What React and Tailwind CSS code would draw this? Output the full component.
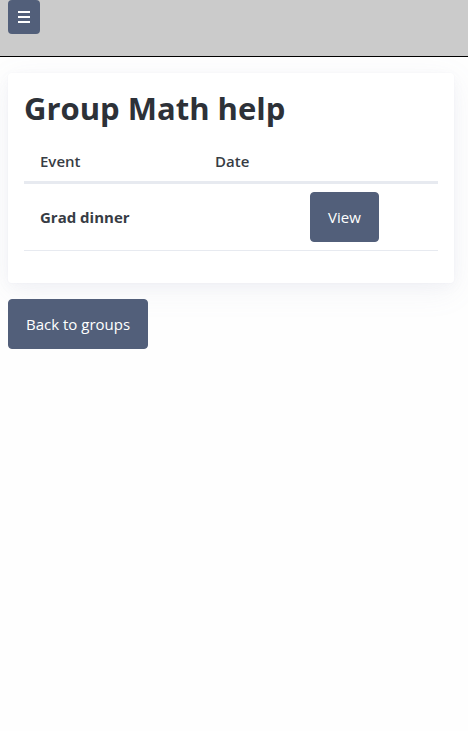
const buttonClass =
  "rounded border border-[#525f7a] bg-[#525f7a] px-[17px] py-3 text-[15px] leading-6 text-white hover:bg-[#434e66]";

const events = [{ name: "Grad dinner", date: "" }];

export default function App() {
  return (
    <div className="min-h-screen bg-[#fefefe] font-['Open_Sans','Noto_Sans',sans-serif] text-[15px] leading-6 text-[#373c44]">
      <header className="h-[57px] border-b border-black bg-[#cbcbcb] px-2">
        <button
          type="button"
          aria-label="Open menu"
          className="flex h-[34px] w-8 items-center justify-center rounded bg-[#525f7a] text-white"
        >
          <svg width="12" height="12" viewBox="0 0 12 12" fill="currentColor" aria-hidden="true">
            <path d="M0 0h12v2H0zM0 5h12v2H0zM0 10h12v2H0z" />
          </svg>
        </button>
      </header>
      <main className="pt-4 pr-3.5 pl-2">
        <article className="mb-4 rounded bg-white px-4 pt-4 pb-8 shadow-[0_4px_12px_rgba(129,145,181,0.05),0_8px_32px_rgba(129,145,181,0.09),0_0_0_1px_rgba(129,145,181,0.02)]">
          <h1 className="mb-[18px] text-[31px] leading-[38px] font-bold text-[#2d3138]">Group Math help</h1>
          <table className="w-full table-fixed border-collapse text-left">
            <colgroup>
              <col className="w-[175px]" />
              <col className="w-[95px]" />
              <col />
            </colgroup>
            <thead>
              <tr className="border-b-3 border-[#e7eaf0]">
                <th scope="col" className="px-4 pt-1 pb-2 font-semibold">Event</th>
                <th scope="col" className="px-4 pt-1 pb-2 font-semibold">Date</th>
                <th scope="col" aria-label="Actions" />
              </tr>
            </thead>
            <tbody>
              {events.map((event) => (
                <tr key={event.name} className="border-b border-[#e7eaf0]">
                  <th scope="row" className="px-4 py-2 font-bold">{event.name}</th>
                  <td className="px-4 py-2">{event.date}</td>
                  <td className="px-4 py-2">
                    <button type="button" className={buttonClass}>View</button>
                  </td>
                </tr>
              ))}
            </tbody>
          </table>
        </article>
        <button type="button" className={buttonClass}>Back to groups</button>
      </main>
    </div>
  );
}
